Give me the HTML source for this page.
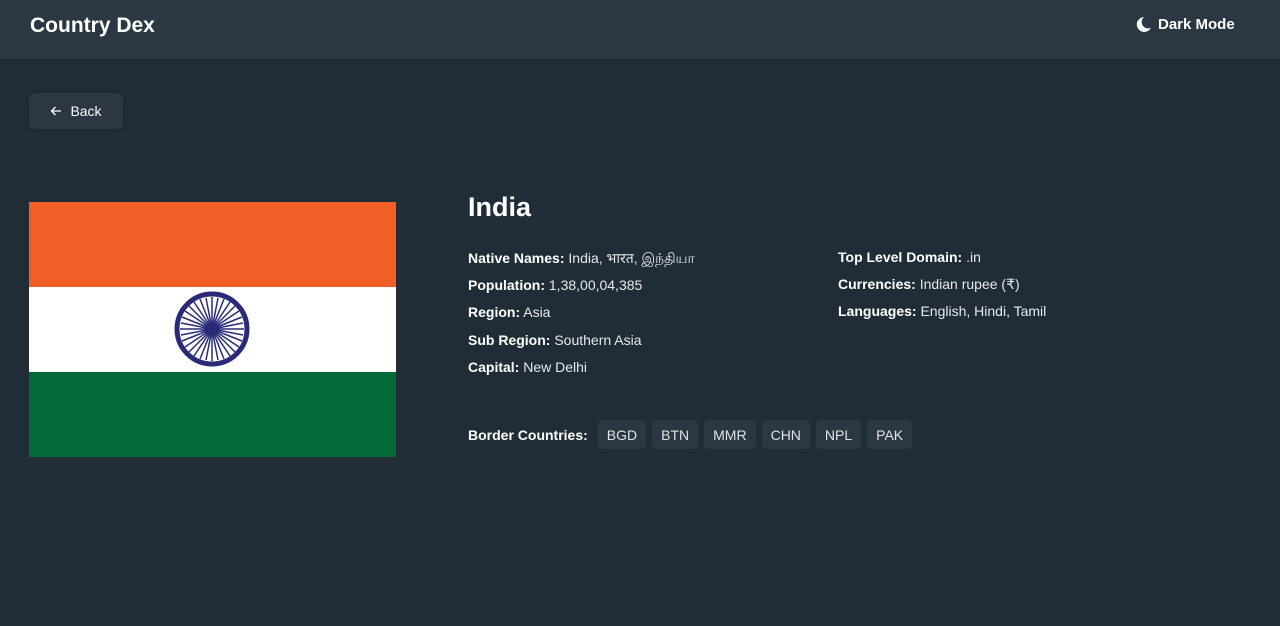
<!DOCTYPE html>
<html><head><meta charset="utf-8"><style>
*{margin:0;padding:0;box-sizing:border-box}
body{width:1280px;height:626px;background:#202c36;font-family:"Liberation Sans","Noto Sans CJK SC",sans-serif;color:#fff;overflow:hidden;position:relative}
header{height:59px;background:#2b3743;position:relative;box-shadow:0 1px 3px rgba(0,0,0,.15)}
.logo{position:absolute;left:30px;top:14px;font-size:21px;font-weight:bold}
.mode{position:absolute;left:1135px;top:16px;font-size:15px;font-weight:bold;display:flex;align-items:center;gap:6px}
.back{position:absolute;left:29px;top:93px;width:94px;height:36px;background:#2b3743;border-radius:5px;font-size:14px;display:flex;align-items:center;justify-content:center;gap:8px;box-shadow:0 0 4px rgba(0,0,0,.2)}
.flag{position:absolute;left:29px;top:202px;width:367px;height:255px}
h1{position:absolute;left:468px;top:192px;font-size:27px;font-weight:bold}
.col{position:absolute;top:249px;font-size:14px;color:#e6e9ec}
.col p{height:27.2px;line-height:18px}
.col b{color:#fff}
.border{position:absolute;left:468px;top:420px;display:flex;align-items:center;font-size:14px}
.border b{margin-right:10px}
.chip{height:29px;padding:0 9px;background:#2b3743;border-radius:4px;margin-right:6px;display:flex;align-items:center;color:#dfe3e6;font-size:14px}
</style></head><body>
<header><div class="logo">Country Dex</div>
<div class="mode"><svg width="17" height="17" viewBox="0 0 16 16"><path d="M8.5 1A7 7 0 1 0 15 11 6 6 0 0 1 8.5 1z" fill="#fff"/></svg>Dark Mode</div></header>
<div class="back"><svg width="12" height="12" viewBox="0 0 12 12"><path d="M11 6H1.5M5.5 2L1.5 6l4 4" stroke="#fff" stroke-width="1.3" fill="none"/></svg>Back</div>
<svg class="flag" viewBox="0 0 367 255"><rect width="367" height="85" fill="#f15f26"/><rect y="85" width="367" height="85" fill="#fff"/><rect y="170" width="367" height="85" fill="#046a38"/>
<circle cx="183" cy="127" r="35" fill="none" stroke="#2a2a78" stroke-width="5"/><circle cx="183" cy="127" r="6" fill="#2a2a78"/>
<g stroke="#2a2a78" stroke-width="1.5">
<line x1="183" y1="95" x2="183" y2="159"/><line x1="151" y1="127" x2="215" y2="127"/><line x1="160" y1="104" x2="206" y2="150"/><line x1="206" y1="104" x2="160" y2="150"/>
<line x1="171" y1="97" x2="195" y2="157"/><line x1="195" y1="97" x2="171" y2="157"/><line x1="153" y1="115" x2="213" y2="139"/><line x1="153" y1="139" x2="213" y2="115"/>
<line x1="177" y1="96" x2="189" y2="158"/><line x1="189" y1="96" x2="177" y2="158"/><line x1="152" y1="121" x2="214" y2="133"/><line x1="152" y1="133" x2="214" y2="121"/>
<line x1="165" y1="100" x2="201" y2="154"/><line x1="201" y1="100" x2="165" y2="154"/><line x1="156" y1="109" x2="210" y2="145"/><line x1="156" y1="145" x2="210" y2="109"/>
</g></svg>
<h1>India</h1>
<div class="col" style="left:468px"><p><b>Native Names:</b> India, भारत, இந்தியா</p><p><b>Population:</b> 1,38,00,04,385</p><p><b>Region:</b> Asia</p><p><b>Sub Region:</b> Southern Asia</p><p><b>Capital:</b> New Delhi</p></div>
<div class="col" style="left:838px;top:248px"><p><b>Top Level Domain:</b> .in</p><p><b>Currencies:</b> Indian rupee (₹)</p><p><b>Languages:</b> English, Hindi, Tamil</p></div>
<div class="border"><b>Border Countries:</b><span class="chip">BGD</span><span class="chip">BTN</span><span class="chip">MMR</span><span class="chip">CHN</span><span class="chip">NPL</span><span class="chip">PAK</span></div>
</body></html>
